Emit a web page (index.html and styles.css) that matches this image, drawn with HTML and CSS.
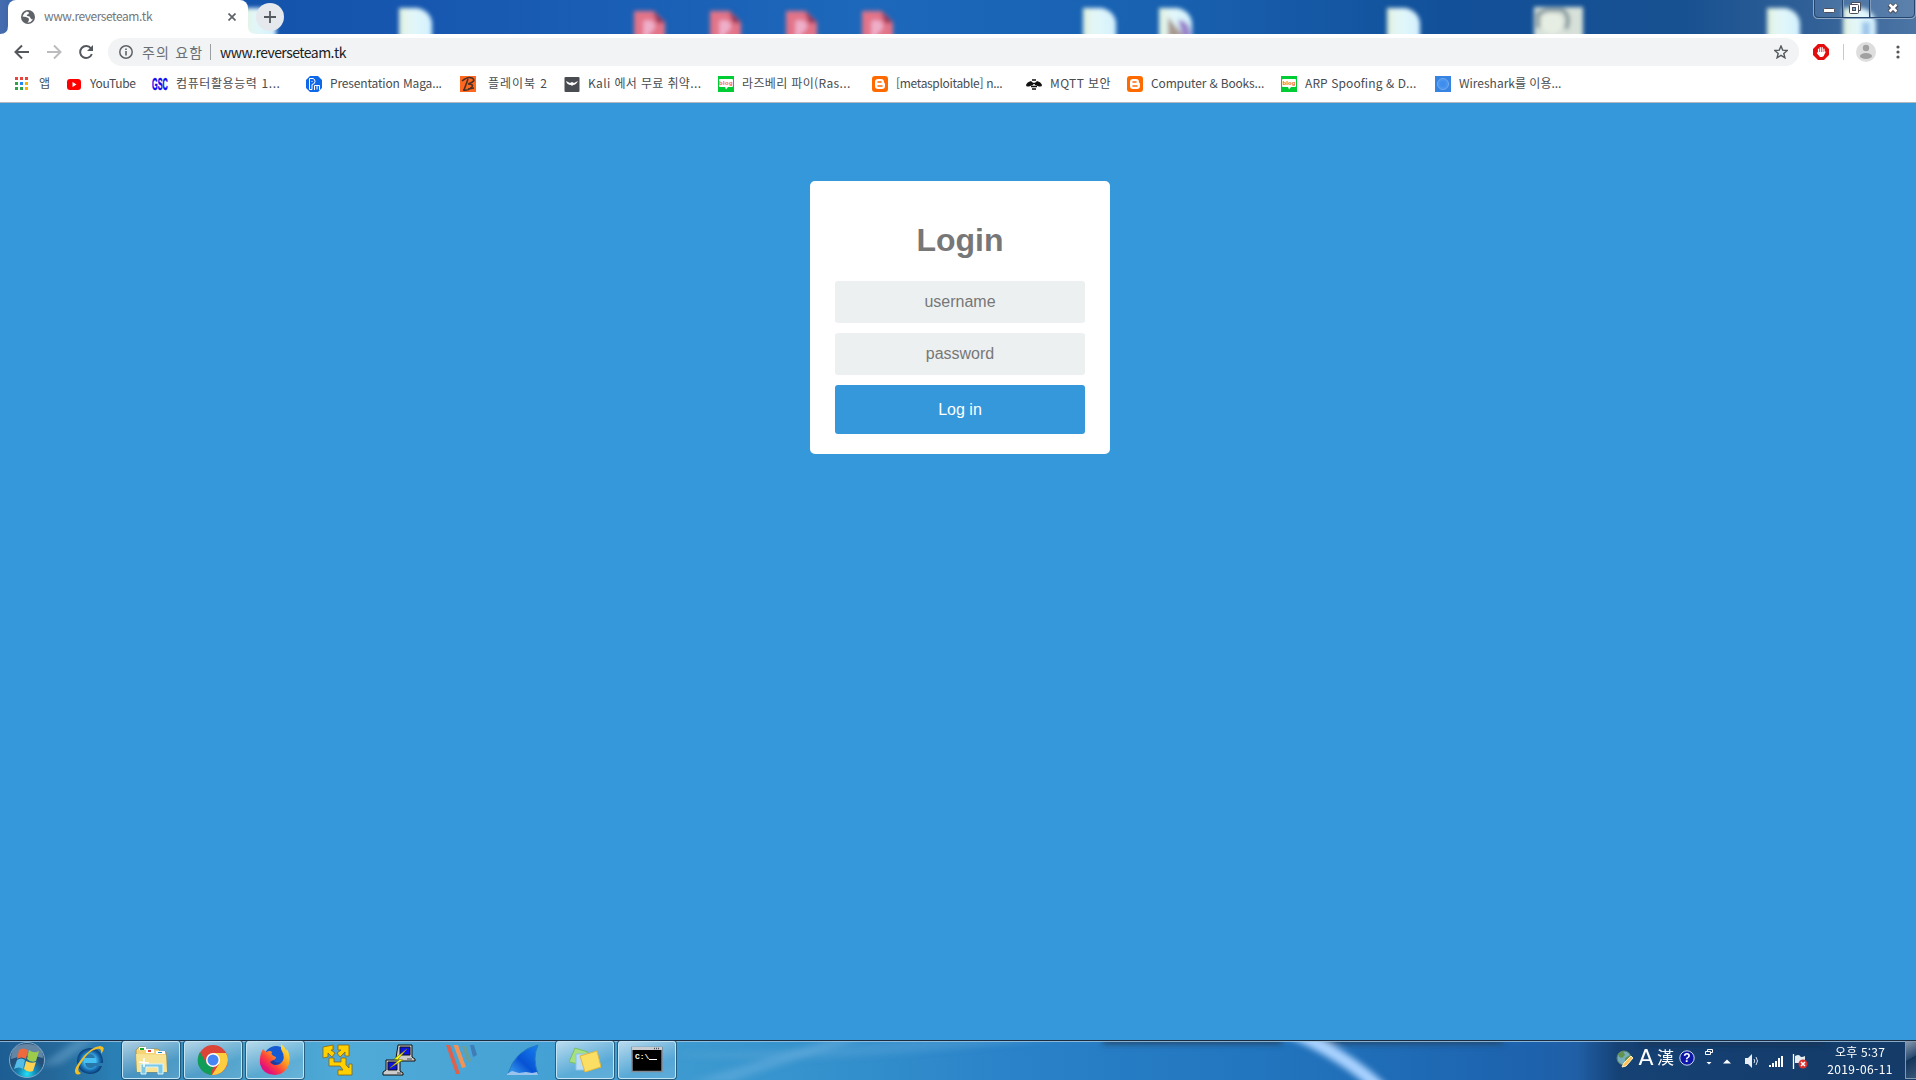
FILE: index.html
```html
<!DOCTYPE html>
<html lang="ko">
<head>
<meta charset="utf-8">
<title>www.reverseteam.tk</title>
<link rel="stylesheet" href="styles.css">
</head>
<body>
<svg class="defs" width="0" height="0" aria-hidden="true">
  <defs>
    <filter id="soft" x="-20%" y="-20%" width="140%" height="140%"><feGaussianBlur stdDeviation="2.2"/></filter>
    <linearGradient id="paper"><stop offset="0" stop-color="#dff0dc"/><stop offset=".35" stop-color="#e4f7f8"/><stop offset="1" stop-color="#d3f1ff"/></linearGradient>
    <symbol id="doc" viewBox="0 0 36 34" overflow="visible"><path d="M1 0H20Q32 3 34 14V40H1Z" fill="url(#paper)"/></symbol>
    <symbol id="pdf" viewBox="0 0 32 32" overflow="visible"><path d="M1 0H21L32 11V40H1Z" fill="#e27388"/><path d="M20 0L32 12H24Z" fill="#922d52"/><path d="M13 26V12H17Q22 15 17 19H13" fill="none" stroke="#efb2cd" stroke-width="5"/></symbol>
    <symbol id="blogger" viewBox="0 0 16 16"><rect width="16" height="16" rx="3" fill="#ff6a00"/><path d="M6 3H9Q12 3 12 6Q12 7 13 7.5V10Q13 13 10 13H6Q3 13 3 10V6Q3 3 6 3Z" fill="#fff"/><path d="M6 6H9M6 10H10" stroke="#ff6a00" stroke-width="1.5" stroke-linecap="round"/></symbol>
    <symbol id="naver" viewBox="0 0 16 16"><rect width="16" height="16" fill="#0c3"/><path d="M2 3H14Q15 3 15 4V10Q15 11 14 11H10L8 13.5L7 11H2Q1 11 1 10V4Q1 3 2 3Z" fill="#fff"/><text x="8" y="9" text-anchor="middle" font-family="Liberation Sans,sans-serif" font-size="6" font-weight="bold" fill="#f26a1b">blog</text></symbol>
  </defs>
</svg>
<div class="screen">
  <header class="titlebar">
    <svg class="wallpaper" width="1916" height="34" viewBox="0 0 1916 34">
      <defs><linearGradient id="sky"><stop offset="0" stop-color="#456cae"/><stop offset=".03" stop-color="#1a51a3"/><stop offset=".12" stop-color="#1453ac"/><stop offset=".22" stop-color="#1757b0"/><stop offset=".45" stop-color="#1d68bb"/><stop offset=".6" stop-color="#1962b2"/><stop offset=".76" stop-color="#125099"/><stop offset=".88" stop-color="#185191"/><stop offset=".95" stop-color="#326197"/><stop offset="1" stop-color="#4c75a4"/></linearGradient></defs>
      <rect width="1916" height="34" fill="url(#sky)"/>
      <g filter="url(#soft)">
        <use href="#doc" x="242" y="8" width="36" height="34"/>
        <use href="#doc" x="398" y="8" width="36" height="34"/>
        <use href="#pdf" x="633" y="11" width="32" height="32"/><use href="#pdf" x="709" y="11" width="32" height="32"/><use href="#pdf" x="785" y="11" width="32" height="32"/><use href="#pdf" x="861" y="11" width="32" height="32"/>
        <use href="#doc" x="1082" y="8" width="36" height="34"/><use href="#doc" x="1158" y="8" width="36" height="34"/>
        <path d="M1168 17L1182 34V38H1168Z" fill="#a89a92"/><path d="M1178 20Q1191 20 1191 38H1183Z" fill="#9a84cb"/>
        <use href="#doc" x="1386" y="8" width="36" height="34"/>
        <path d="M1534 7H1583V40H1534Z" fill="#d7e1d9"/><path d="M1538 28V14L1546 10H1563Q1571 17 1566 29" fill="none" stroke="#7f9298" stroke-width="4"/><circle cx="1552" cy="23" r="11" fill="#e6ede2"/>
        <use href="#doc" x="1766" y="8" width="36" height="34"/><use href="#doc" x="1842" y="8" width="36" height="34"/><path d="M1862 22H1870V38H1862Z" fill="#9cc6ea"/>
      </g>
    </svg>
    <div class="tab">
      <svg width="14" height="14" viewBox="0 0 14 14"><circle cx="7" cy="7" r="7" fill="#5f6368"/><path d="M6 1.5L3.5 3Q2 5 1.5 6.5L5 7Q8 8 8 9Q8 11 6.5 12.7Q10 12.5 12 9.5Q10 9.5 9.5 8Q9 6 6.500 6Q5 5.800 6 4.800Q8 4.500 8 2.500Z" fill="#fff"/></svg>
      <span class="tab-title">www.reverseteam.tk</span>
      <svg width="8" height="8" viewBox="0 0 8 8"><path d="M.5.5L7.5 7.5M7.5.5L.5 7.5" stroke="#5f6368" stroke-width="1.7"/></svg>
      <svg class="tab-foot foot-left" width="8" height="8"><path d="M8 0V8H0Q8 8 8 0" fill="#fff"/></svg><svg class="tab-foot foot-right" width="8" height="8"><path d="M0 0V8H8Q0 8 0 0" fill="#fff"/></svg>
    </div>
    <div class="new-tab"><svg width="12" height="12" viewBox="0 0 12 12"><path d="M6 0V12M0 6H12" stroke="#54595f" stroke-width="1.8"/></svg></div>
    <svg class="window-controls" width="103" height="19" viewBox="0 0 103 19">
      <path d="M.5 0V14Q.5 18.5 5 18.5H98Q102.500 18.5 102.500 14V0" fill="#ffffff18" stroke="#8fa8c5"/>
      <path d="M1.500 0V13Q1.500 17.500 6 17.500H97Q101.500 17.500 101.500 13V0M29.500 0V17M56.500 0V17" fill="none" stroke="#24466f"/><path d="M30.500 0V17M57.500 0V17" stroke="#7f9bbd"/>
      <rect x="10.500" y="8.500" width="11" height="4" rx="1" fill="#fff" stroke="#4b4d5b"/>
      <path d="M38.500 2.500H47.500V10.500H38.500Z" fill="#fff" stroke="#4b4d5b"/><rect x="36.500" y="4.500" width="9" height="9" rx="1" fill="#fff" stroke="#4b4d5b"/><rect x="39.500" y="7.500" width="3" height="3" fill="#7cabd0" stroke="#4b4d5b"/>
      <path d="M76 4.500L84 12M84 4.500L76 12" stroke="#4b4d5b" stroke-width="4.500"/><path d="M76.500 4.500L83.500 11.500M83.500 4.500L76.500 11.500" stroke="#fff" stroke-width="2.500"/>
    </svg>
  </header>

  <nav class="toolbar">
    <div class="nav-buttons">
      <svg width="16" height="16" viewBox="0 0 16 16"><path d="M15 8H2M8 1.500L1.500 8L8 14.500" fill="none" stroke="#54585d" stroke-width="2"/></svg>
      <svg width="16" height="16" viewBox="0 0 16 16"><path d="M1 8H14M8 1.500L14.500 8L8 14.500" fill="none" stroke="#babcbe" stroke-width="2"/></svg>
      <svg width="16" height="16" viewBox="0 0 16 16"><path d="M13 4.500A6 6 0 1 0 13.800 10" fill="none" stroke="#54585d" stroke-width="2"/><path d="M15 1V7H9Z" fill="#54585d"/></svg>
    </div>
    <div class="omnibox">
      <svg width="14" height="14" viewBox="0 0 14 14"><circle cx="7" cy="7" r="6.200" fill="none" stroke="#5f6368" stroke-width="1.500"/><path d="M7 6V10.500M7 3.500V5" stroke="#5f6368" stroke-width="1.600"/></svg>
      <span class="warning">주의 요함</span><span class="divider"></span><span class="address">www.reverseteam.tk</span>
      <svg class="star" width="14" height="14" viewBox="0 0 14 14"><path d="M7 1L8.700 5.100L13.200 5.500L9.800 8.400L10.900 12.800L7 10.400L3.100 12.800L4.200 8.400L.8 5.500L5.300 5.100Z" fill="none" stroke="#54585d" stroke-width="1.400"/></svg>
    </div>
    <svg class="adblock" width="16" height="16" viewBox="0 0 16 16"><path d="M5 0H11L16 5V11L11 16H5L0 11V5Z" fill="#e40d0d"/><path d="M5.500 9V5M7.300 9V3.500M9.200 9V3.500M11 10V5M4.500 9L7 12H10L12 8" fill="none" stroke="#fff" stroke-width="1.200" stroke-linecap="round"/><path d="M5 8H11V11L9 13H7Z" fill="#fff"/></svg>
    <span class="tool-divider"></span>
    <svg class="profile" width="20" height="20" viewBox="0 0 20 20"><circle cx="10" cy="10" r="10" fill="#dedede"/><circle cx="10" cy="6" r="3.200" fill="#a1a1a1"/><ellipse cx="10" cy="14" rx="6" ry="3" fill="#a1a1a1"/></svg>
    <svg class="menu" width="4" height="14" viewBox="0 0 4 14"><g fill="#54585d"><circle cx="2" cy="2" r="1.600"/><circle cx="2" cy="7" r="1.600"/><circle cx="2" cy="12" r="1.600"/></g></svg>
  </nav>

  <nav class="bookmarks">
    <a class="bookmark apps"><svg width="16" height="16" viewBox="0 0 16 16"><path d="M1 1H4V4H1ZM6 1H9V4H6ZM11 1H14V4H11Z" fill="#e8453c"/><path d="M1 6H4V9H1ZM1 11H4V14H1ZM6 11H9V14H6Z" fill="#2fa24c"/><path d="M6 6H9V9H6Z" fill="#2287f5"/><path d="M11 6H14V9H11ZM11 11H14V14H11Z" fill="#f6b400"/></svg><span>앱</span></a>
    <a class="bookmark youtube"><svg width="16" height="16" viewBox="0 0 16 16"><rect x="1" y="3" width="14" height="11" rx="3" fill="#f00"/><path d="M6.500 6V11L10.500 8.500Z" fill="#fff"/></svg><span>YouTube</span></a>
    <a class="bookmark wide"><svg class="gsc" width="16" height="16" viewBox="0 0 16 16"><text transform="matrix(.52 0 0 1.2 0 14)" fill="#0d08ee" stroke="#0d08ee" stroke-width=".4" font-family="Liberation Sans,sans-serif" font-size="14" font-weight="bold">GSC</text></svg><span>컴퓨터활용능력 1...</span></a>
    <a class="bookmark tight"><svg width="16" height="16" viewBox="0 0 16 16"><path d="M4 0H12L16 4V12L12 16H4L0 12V4Z" fill="#0f68e8"/><path d="M3.500 13.500V2.500H7Q9 3 9 5.500Q9 8 6 8.500V13.500ZM8.500 14V9.500H13.500V14M11 9.500V13.500M6 5V6" fill="none" stroke="#fff"/></svg><span>Presentation Maga...</span></a>
    <a class="bookmark playbook"><svg width="16" height="16" viewBox="0 0 16 16"><rect width="16" height="16" fill="#ff681e"/><path d="M2 5Q8 0 12 2Q17 5 8 8Q15 8 11 12Q8 15 3 14M8 3L4 14M8 13L14 12" fill="none" stroke="#493126" stroke-width="1.600"/></svg><span>플레이북 2</span></a>
    <a class="bookmark roomy"><svg width="16" height="16" viewBox="0 0 16 16"><rect x=".5" y="1" width="15" height="15" rx="1" fill="#494c50"/><path d="M2 5L6 7L8 6L10 7L14 5Q12 9 9 9L8 10L7 9Q3 9 2 5Z" fill="#fff"/></svg><span>Kali 에서 무료 취약...</span></a>
    <a class="bookmark roomy"><svg width="16" height="16"><use href="#naver"/></svg><span>라즈베리 파이(Ras...</span></a>
    <a class="bookmark tighter"><svg width="16" height="16"><use href="#blogger"/></svg><span>[metasploitable] n...</span></a>
    <a class="bookmark mqtt"><svg width="16" height="16" viewBox="0 0 16 16"><path d="M0 9Q1 6 5 5L7 7V9L3 10.500Q0 11 0 9ZM16 9Q15 6 11 5L9 7V9L13 10.500Q16 11 16 9Z" fill="#111"/><path d="M6 4H10M6 7.500H10M5 10.500H11M6 13H10" fill="none" stroke="#111" stroke-width="1.400"/></svg><span>MQTT 보안</span></a>
    <a class="bookmark tight"><svg width="16" height="16"><use href="#blogger"/></svg><span>Computer &amp; Books...</span></a>
    <a class="bookmark loose"><svg width="16" height="16"><use href="#naver"/></svg><span>ARP Spoofing &amp; D...</span></a>
    <a class="bookmark"><svg width="16" height="16" viewBox="0 0 16 16"><rect width="16" height="16" fill="#3683e2"/><circle cx="8" cy="8" r="5.500" fill="#4895ef" stroke="#72aaf0"/><circle cx="8" cy="8" r="3" fill="#3f8eee"/></svg><span>Wireshark를 이용...</span></a>
  </nav>

  <main class="page">
    <form class="login-card">
      <h1>Login</h1>
      <input type="text" placeholder="username">
      <input type="password" placeholder="password">
      <button type="button">Log in</button>
    </form>
  </main>

  <footer class="taskbar">
    <svg class="taskbar-glass" width="1916" height="40" viewBox="0 0 1916 40">
      <defs>
        <linearGradient id="glass"><stop offset="0" stop-color="#1c5d93"/><stop offset=".025" stop-color="#246697"/><stop offset=".06" stop-color="#2a80b5"/><stop offset=".12" stop-color="#3c97c6"/><stop offset=".18" stop-color="#50abd8"/><stop offset=".34" stop-color="#3f9cd1"/><stop offset=".44" stop-color="#3490cc"/><stop offset=".53" stop-color="#2a82c8"/><stop offset=".65" stop-color="#2276bf"/><stop offset=".8" stop-color="#1d62ad"/><stop offset=".823" stop-color="#205fa6"/><stop offset=".845" stop-color="#154174"/><stop offset="1" stop-color="#143b68"/></linearGradient>
        <filter id="arcblur"><feGaussianBlur stdDeviation="3"/></filter>
      </defs>
      <rect width="1916" height="40" fill="url(#glass)"/>
      <g filter="url(#arcblur)">
        <path d="M40 26L76 0H96L60 24Z" fill="#8fc4e5" opacity=".35"/>
        <path d="M690 42Q770 18 840-4H870Q770 28 730 42Z" fill="#77b9e3" opacity=".4"/><path d="M670 14Q800 28 1060-2H930Q800 12 670 14Z" fill="#6ab0df" opacity=".3"/>
        <path d="M1103-4H1282V4H1103ZM1320-4H1503V4H1320Z" fill="#20486e"/><path d="M1284-12Q1345 14 1382 50" fill="none" stroke="#a9d2ff" stroke-width="13"/><path d="M1640 0H1825V4H1640Z" fill="#182e4c"/>
      </g>
      <path d="M0 .5H1916" stroke="#1b2c40"/><path d="M0 1.500H1916" stroke="#a4c9e3" opacity=".8"/>
    </svg>
    <div class="start"><svg width="38" height="38" viewBox="0 0 38 38"><defs><radialGradient id="orb" cy=".9"><stop stop-color="#24e1f3"/><stop offset=".5" stop-color="#1488b9"/><stop offset="1" stop-color="#234f78"/></radialGradient></defs><circle cx="19" cy="19" r="17.500" fill="url(#orb)" stroke="#83aac8"/><path d="M3 18Q3 3 19 3T35 17Q19 12 3 18Z" fill="#c1d9e6" opacity=".4"/><path d="M11 9Q15 6 20 9L18 18Q13 15 9 18Z" fill="#ee693d"/><path d="M21 9Q26 13 31 10L28 20Q23 22 19 18Z" fill="#9dcc4b"/><path d="M9 19Q13 16 17 19L15 28Q11 25 6 28Z" fill="#55bce8"/><path d="M18 20Q23 23 28 21L25 30Q20 32 16 28Z" fill="#fdd251"/></svg></div>
    <div class="task"><svg width="34" height="34" viewBox="0 0 34 34"><defs><radialGradient id="ie" gradientUnits="userSpaceOnUse" cx="18" cy="18" r="14"><stop offset=".4" stop-color="#45c0f4"/><stop offset=".7" stop-color="#1769ae"/><stop offset="1" stop-color="#062e62"/></radialGradient></defs><path d="M31 20H13Q14 25 18 25Q22 25 23 23H30Q27 31 18 31Q6 30 5 18Q6 6 18 5Q31 6 31 20ZM13 15H23Q22 11 18 11Q14 11 13 15Z" fill="url(#ie)"/><path d="M6 31Q-1 30 8 18Q18 4 28 3Q35 4 29 11Q30 5 25 6Q17 7 10 19Q3 28 9 30Q6 33 3 30" fill="#f3bd25"/></svg></div>
    <div class="task open"><svg width="34" height="34" viewBox="0 0 34 34"><path d="M2 7L5 4H11L13 7L17 6L24 6L27 9H32L33 29L3 29Z" fill="#f5d477" stroke="#9c8542" stroke-width=".7"/><path d="M5 4H12V7H5Z" fill="#fff"/><path d="M6 5H10V7H6Z" fill="#15a82b"/><path d="M12 6H20V10H12ZM22 8H31V11H22Z" fill="#fff"/><path d="M14 7H17V9H14Z" fill="#df4332"/><path d="M24 9H28V10H24Z" fill="#168ac8"/><path d="M2 11L32 12L33 29H3Z" fill="#f8e395"/><path d="M7 30V21H29V31H24V24H12V31H7Z" fill="#7dc7e5" stroke="#d6f6ff"/><path d="M10 15V24M5 19L15 20" stroke="#fff" stroke-width="1.500"/></svg></div>
    <div class="task open"><svg width="32" height="32" viewBox="0 0 32 32"><circle cx="16" cy="16" r="15" fill="#db4437"/><path d="M3 8L10 20L16 23L14 31A15 15 0 0 1 3 8" fill="#109d58"/><path d="M16 9H29A15 15 0 0 1 15 31L22 20Z" fill="#fdcd40"/><circle cx="16" cy="16" r="7" fill="#fff"/><circle cx="16" cy="16" r="5.500" fill="#4686f4"/></svg></div>
    <div class="task open"><svg width="32" height="32" viewBox="0 0 32 32"><defs><linearGradient id="fox" x1=".9" y1="0" x2=".2" y2=".8"><stop stop-color="#fff347"/><stop offset=".45" stop-color="#ff9c22"/><stop offset=".75" stop-color="#ff403c"/><stop offset="1" stop-color="#e2127b"/></linearGradient></defs><circle cx="17" cy="14" r="12" fill="#165bd2"/><path d="M4 5Q6 7 7 8Q11 6 13 8Q11 11 17 13Q17 16 12 17Q15 23 21 20Q28 15 22 5L22 0Q27 4 27 7L28 5Q32 13 30 20Q26 31 16 31Q4 31 1 20Q0 12 4 5Z" fill="url(#fox)"/><path d="M11 18Q15 24 22 18Q16 20 15 16Z" fill="#223b96"/></svg></div>
    <div class="task"><svg width="32" height="32" viewBox="0 0 32 32"><path d="M2 3L12 1V6H10L14 9L11 13L7 9V13L2 14ZM17 1H28V12H24V8L19 13L16 9L20 6H17ZM8 14H13V18H20V14H25V21L28 24V20H31V31H17V26H22L19 22H8Z" fill="#ffd000" stroke="#866315" stroke-width=".8"/></svg></div>
    <div class="task"><svg width="34" height="34" viewBox="0 0 34 34"><g stroke="#111"><path d="M16 2H30V14L33 16V18H19L14 15Z" fill="#ccc"/><path d="M18 4H28V12H18Z" fill="#0b12e8"/><path d="M4 17H18V28L21 30V32H1V29L4 27Z" fill="#ccc"/><path d="M6 19H15V27H6Z" fill="#0b12e8"/><path d="M25 6L12 16L17 17L8 25L21 17L16 16Z" fill="#ffff16" stroke="#777700" stroke-width=".6"/></g><path d="M15 30H19M25 16H30" stroke="#444"/></svg></div>
    <div class="task"><svg width="32" height="32" viewBox="0 0 32 32"><path d="M1 1H5L15 30H11Z" fill="#df614b"/><path d="M8.500 1H13L21 23L17 24Z" fill="#f39457"/><path d="M17 2H21L26.500 17L22.500 18Z" fill="#6c9f9b"/><path d="M25 1H29L32 11L28 13Z" fill="#3e7db8"/></svg></div>
    <div class="task"><svg width="32" height="32" viewBox="0 0 32 32"><defs><linearGradient id="fin" x1="1" y1="0" x2="0" y2="1"><stop stop-color="#1682ef"/><stop offset=".55" stop-color="#0752d4"/><stop offset="1" stop-color="#40a7ee"/></linearGradient></defs><path d="M1 30Q8 6 31 1Q25 14 31 30Z" fill="url(#fin)" stroke="#277bc4"/><path d="M0 30L5 27L12 29L19 28L25 29L30 28L31 31H0Z" fill="#9cc3ee"/></svg></div>
    <div class="task open"><svg width="32" height="32" viewBox="0 0 32 32"><path d="M6 4L19 8L14 21L0 18Z" fill="#a8df80" stroke="#76bf66"/><path d="M7 10H20L22 26L7 26Z" fill="#b9dcf7" stroke="#8bc4e7"/><path d="M11 12L28 7L32 23L16 28Z" fill="#fbdf65" stroke="#dfb83c"/></svg></div>
    <div class="task open"><svg width="32" height="32" viewBox="0 0 32 32"><rect x="1" y="3.500" width="30" height="24" fill="#000" stroke="#858991" stroke-width="1.500"/><path d="M1 4.500H31" stroke="#c8cbd0" stroke-width="3"/><path d="M23 4.500H29" stroke="#4a4e54" stroke-width="1.500" stroke-dasharray="1 1"/><text x="4" y="15" fill="#fff" font-family="Liberation Mono,monospace" font-size="8" font-weight="bold">C:\</text><path d="M18 15.500H26" stroke="#fff"/></svg></div>

    <div class="tray">
      <svg class="globe" width="18" height="18" viewBox="0 0 18 18"><circle cx="8" cy="8" r="7" fill="#76aebc" stroke="#637f64"/><path d="M2 4L7 1L9 5L6 8L3 7ZM9 8L14 5V11L9 14Z" fill="#64934e"/><path d="M8 13L15 6L17 8L10 16L6 17Z" fill="#ffc158" stroke="#fff0c0"/></svg>
      <span class="ime-latin">A</span><span class="ime-hanja">漢</span>
      <svg class="help" width="16" height="16" viewBox="0 0 16 16"><circle cx="8" cy="8" r="7.200" fill="#0c16a9" stroke="#ced9eb"/><text x="8" y="12" text-anchor="middle" fill="#fff" font-family="Liberation Sans,sans-serif" font-size="12" font-weight="bold">?</text></svg>
      <svg class="ime-menu" width="10" height="18" viewBox="0 0 10 18"><path d="M3.500 3V1.500H8.500V4.500H7M1.500 3.500H6.500V6.500H1.500Z" fill="none" stroke="#fff"/><path d="M2.500 14H7.500L5 16.500Z" fill="#fff"/></svg>
      <svg class="expand" width="8" height="5" viewBox="0 0 8 5"><path d="M0 4.500L4 .5L8 4.500Z" fill="#fff"/></svg>
      <svg class="speaker" width="16" height="16" viewBox="0 0 16 16"><path d="M1 5H4L8 1V15L4 11H1Z" fill="#e8eef4"/><path d="M10 6Q11.500 8 10 10M12 4Q15 8 12 12" fill="none" stroke="#d8e3ee"/></svg>
      <svg class="signal" width="16" height="16" viewBox="0 0 16 16"><path d="M1 14V12H3V14ZM4 14V10H6V14ZM7 14V8H9V14ZM10 14V5H12V14ZM13 14V3H15V14Z" fill="#fff"/></svg>
      <svg class="flag" width="16" height="16" viewBox="0 0 16 16"><path d="M1.500 1V16" stroke="#fff" stroke-width="1.300"/><path d="M3 3Q7 1 8 3T13 3V10H3Z" fill="#e6edf2"/><circle cx="11" cy="11" r="4.500" fill="#da3030"/><path d="M9 9L13 13M13 9L9 13" stroke="#fff" stroke-width="1.500"/></svg>
      <div class="clock"><span>오후 5:37</span><span class="date">2019-06-11</span></div>
      <div class="show-desktop"></div>
    </div>
  </footer>
</div>
</body>
</html>
```
FILE: styles.css
```css
* { box-sizing: border-box; }
body { margin: 0; overflow: hidden; font-family: "Noto Sans CJK KR", "Noto Sans", sans-serif; }
svg { display: block; flex: none; }
.defs { position: absolute; }
.screen { width: 1916px; height: 1080px; display: flex; flex-direction: column; }

.titlebar { height: 34px; flex: none; position: relative; display: flex; align-items: flex-start; padding-left: 8px; }
.wallpaper, .taskbar-glass { position: absolute; left: 0; top: 0; }
.tab { position: relative; width: 240px; height: 34px; border-radius: 8px 8px 0 0; background: #fff; display: flex; align-items: center; padding: 0 12px 0 13px; }
.tab-title { flex: 1; margin: -2px 0 0 9px; font-size: 12px; line-height: 20px; color: #74777b; letter-spacing: -.45px; }
.tab-foot { position: absolute; bottom: 0; }
.foot-left { left: -8px; }
.foot-right { right: -8px; }
.new-tab { position: relative; width: 28px; height: 28px; margin: 3px 0 0 8px; border-radius: 50%; background: #e5e9ed; display: flex; align-items: center; justify-content: center; }
.window-controls { position: relative; margin-left: auto; }

.toolbar { height: 36px; flex: none; background: #fff; display: flex; align-items: center; padding-left: 14px; }
.nav-buttons { display: flex; gap: 16px; width: 94px; }
.omnibox { width: 1691px; height: 28px; border-radius: 14px; background: #f1f3f4; display: flex; align-items: center; padding: 0 11px; font-size: 14px; }
.warning { width: 60px; margin: -1px 0 0 9px; color: #6b6f74; white-space: nowrap; letter-spacing: 1.2px; }
.divider { width: 1px; height: 16px; margin: 0 9px 0 8px; background: #9b9ea2; }
.address { margin-top: -1px; color: #202124; letter-spacing: -.54px; }
.star { margin-left: auto; }
.adblock { margin-left: 14px; }
.tool-divider { width: 1px; height: 16px; margin: 0 12px 0 14px; background: #c7c9cb; }
.menu { margin-left: 20px; }

.bookmarks { height: 33px; flex: none; background: #fff; border-bottom: 1px solid #b4b7bb; display: flex; padding: 6px 0 0 14px; }
.bookmark { width: 154px; height: 16px; display: flex; align-items: center; gap: 8px; color: #484c50; font-size: 12px; line-height: 16px; white-space: nowrap; }
.bookmark span { margin-top: -2px; }
.gsc { overflow: visible; letter-spacing: 0; }
.apps { width: 52px; gap: 9px; }
.youtube { width: 86px; letter-spacing: -.35px; }
.wide { letter-spacing: .6px; }
.roomy { letter-spacing: .36px; }
.loose { letter-spacing: .1px; }
.tight { letter-spacing: -.15px; }
.tighter { letter-spacing: -.32px; }
.playbook { width: 104px; gap: 12px; letter-spacing: .95px; }
.mqtt { width: 101px; letter-spacing: .4px; }

.page { height: 937px; flex: none; background: #3498db; padding-top: 78px; }
.login-card { width: 300px; height: 273px; margin-left: 810px; padding: 0 25px; border-radius: 5px; background: #fff; display: flex; flex-direction: column; font-family: "Liberation Sans", Arial, sans-serif; }
.login-card h1 { margin: 41px 0 22px; height: 37px; color: #777; font-size: 32px; line-height: 37px; text-align: center; }
.login-card input { height: 42px; margin: 0 0 10px; border: 0; border-radius: 3px; background: #ecf0f1; text-align: center; font: 16px "Liberation Sans", Arial, sans-serif; padding: 0; }
.login-card input::placeholder { color: #777; opacity: 1; }
.login-card button { height: 49px; border: 0; border-radius: 3px; background: #3498db; color: #fff; font: 16px "Liberation Sans", Arial, sans-serif; }

.taskbar { height: 40px; flex: none; position: relative; display: flex; }
.start { position: relative; width: 58px; padding: 1px 0 0 8px; }
.task { position: relative; width: 58px; height: 38px; margin: 1px 2px 0; display: flex; align-items: center; justify-content: center; }
.open { border: 1px solid #c4e5f6; border-radius: 3px; box-shadow: 0 0 0 1px #1b3f58b0; background: linear-gradient(160deg, #ffffffa0, #ffffff58 35%, #ffffff20 65%, #ffffff2c); }
.tray { position: relative; flex: 1; display: flex; align-items: flex-start; color: #fff; margin-left: 60px; padding-left: 878px; }
.globe { margin-top: 10px; }
.ime-latin { width: 20px; margin: 6px 0 0 2px; text-align: center; font: 22px/24px "DejaVu Sans", sans-serif; }
.ime-hanja { width: 20px; font-size: 17px; line-height: 24px; margin: 5px 0 0 1px; }
.help { margin: 10px 0 0 2px; }
.ime-menu { margin: 8px 0 0 9px; }
.expand { margin: 19px 0 0 9px; }
.speaker { margin: 13px 0 0 13px; }
.signal { margin: 13px 0 0 8px; }
.flag { margin: 13px 0 0 8px; }
.clock { width: 84px; margin: 3px 0 0 10px; display: flex; flex-direction: column; align-items: center; font-size: 12px; line-height: 17px; letter-spacing: .2px; }
.date { letter-spacing: .4px; }
.show-desktop { width: 11px; height: 38px; margin: 1px 0 0 auto; border: 1px solid #8598ad; border-right: 0; background: linear-gradient(150deg, #8497ae, #29496f 45%, #133359 46%, #375578); }
```
